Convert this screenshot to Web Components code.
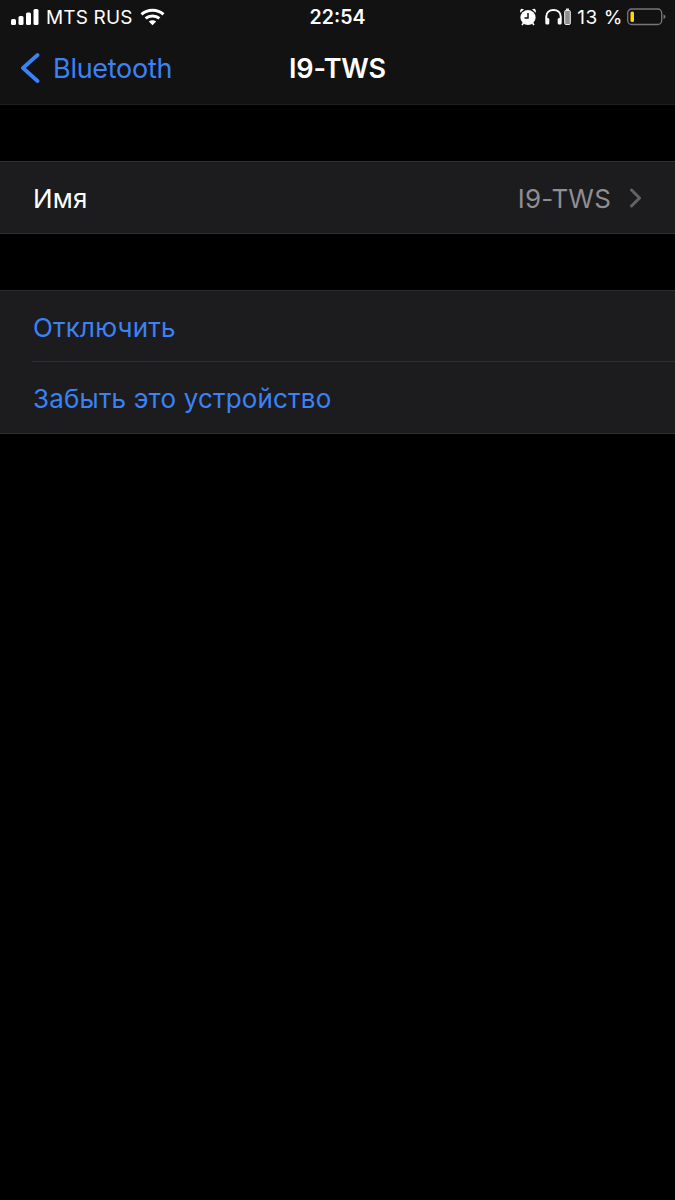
<!DOCTYPE html>
<html lang="ru">
<head>
<meta charset="utf-8">
<title>I9-TWS</title>
<style>
  html, body { margin: 0; background: #000; }
  body { height: 1200px; overflow: hidden; font-family: Inter, "Liberation Sans", sans-serif; }
  settings-group { margin-top: 56px; }
</style>
</head>
<body>
<nav-header back="Bluetooth" title="I9-TWS"></nav-header>
<settings-group>
  <settings-row label="Имя" value="I9-TWS"></settings-row>
</settings-group>
<settings-group>
  <settings-row label="Отключить" action></settings-row>
  <settings-row label="Забыть это устройство" action></settings-row>
</settings-group>

<script>
(function () {
  const statusTemplate = document.createElement("template");
  statusTemplate.innerHTML = `
    <style>
      :host {
        display: flex;
        align-items: center;
        justify-content: space-between;
        height: 34px;
        padding: 0 9px 0 11px;
        color: #fff;
        font-size: 19px;
        font-weight: 400;
        letter-spacing: 0.15px;
      }
      .side { display: flex; align-items: center; width: 240px; }
      .side.right { justify-content: flex-end; }
      .time { font-weight: 600; font-size: 19.5px; letter-spacing: 0; margin-right: 2px; }
      svg { display: block; flex: none; }
      .carrier { margin: 0 7px 0 7px; }
      .pct { margin: 0 4px 0 6px; letter-spacing: 0.6px; }
    </style>
    <div class="side">
      <svg width="28" height="18" viewBox="0 0 28 18" fill="#fff">
        <rect x="0" y="11" width="5" height="6" rx="1.5"/>
        <rect x="7.5" y="8" width="5" height="9" rx="1.5"/>
        <rect x="15" y="4.5" width="5" height="12.5" rx="1.5"/>
        <rect x="22.5" y="1" width="5" height="16" rx="1.5"/>
      </svg>
      <span class="carrier">MTS RUS</span>
      <svg width="25" height="18" viewBox="0 0 25 18" fill="none" stroke="#fff" stroke-width="3">
        <path d="M1.5 6.4C7.6 .9 17.4 .9 23.5 6.4"/>
        <path d="M5.6 10.4C9.4 7.2 15.6 7.2 19.4 10.4"/>
        <path d="M12.5 17.2L8.8 13.4C10.8 12 14.2 12 16.2 13.4Z" fill="#fff" stroke="none"/>
      </svg>
    </div>
    <span class="time">22:54</span>
    <div class="side right">
      <svg width="16" height="18" viewBox="0 0 16 18">
        <circle cx="8" cy="9.500" r="7.600" fill="#fff"/>
        <path d="M8 5v5H4.500" fill="none" stroke="#121212" stroke-width="1.500"/>
        <path d="M.3 4.800L4 1.200 1.400 .8C.3 1.200-.1 3.200.3 4.800ZM15.700 4.800L12 1.200 14.600 .8C15.700 1.200 16.100 3.200 15.700 4.800Z" fill="#fff"/>
        <path d="M3.500 15L2 17M12.500 15L14 17" stroke="#fff" stroke-width="1.600"/>
      </svg>
      <svg style="margin-left:9px" width="17" height="18" viewBox="0 0 17 18" fill="none">
        <path d="M1.300 11V8.500C1.300 4.500 4.500 2 8.500 2s7.200 2.500 7.200 6.500V11" stroke="#fff" stroke-width="2"/>
        <rect x="0.300" y="10" width="4" height="6.500" rx="1.500" fill="#fff"/>
        <rect x="12.700" y="10" width="4" height="6.500" rx="1.500" fill="#fff"/>
      </svg>
      <svg style="margin-left:2px" width="7" height="18" viewBox="0 0 7 18" fill="none">
        <rect x="2" y="0.500" width="3" height="2" fill="#ddd"/>
        <rect x="0.700" y="2.500" width="5.600" height="14" rx="1" fill="#8e8e8e" stroke="#eee" stroke-width="1"/>
      </svg>
      <span class="pct">13 %</span>
      <svg width="39" height="18" viewBox="0 0 39 18" fill="none">
        <rect x="0.700" y="1" width="34" height="15.500" rx="4" stroke="#777" stroke-width="1.300"/>
        <rect x="3.500" y="3.500" width="3.500" height="10.500" rx="1.500" fill="#ffd60a"/>
        <path d="M36.500 6.500C38 7 38.500 8 38.500 8.750S38 10.500 36.500 11Z" fill="#777"/>
      </svg>
    </div>
  `;

  class StatusBar extends HTMLElement {
    constructor() {
      super();
      this.attachShadow({ mode: "open" });
      this.shadowRoot.appendChild(statusTemplate.content.cloneNode(true));
    }
  }

  const headerTemplate = document.createElement("template");
  headerTemplate.innerHTML = `
    <style>
      :host {
        display: block;
        background: #121212;
        border-bottom: 1px solid #1f1f1f;
      }
      .bar {
        display: grid;
        grid-template-columns: 1fr auto 1fr;
        align-items: center;
        height: 70px;
        padding: 0 20px 2px;
        box-sizing: border-box;
      }
      .back {
        display: flex;
        align-items: center;
        gap: 13px;
        color: #3b82f6;
        font-size: 27px;
        letter-spacing: -0.28px;
      }
      .title {
        color: #fff;
        font-size: 27px;
        font-weight: 600;
        letter-spacing: -0.2px;
      }
      svg { display: block; }
    </style>
    <status-bar></status-bar>
    <div class="bar">
      <div class="back">
        <svg width="20" height="32" viewBox="0 0 20 32" fill="none">
          <path d="M17.500 3L3 16l14.500 13" stroke="#3b82f6" stroke-width="3.800" stroke-linecap="round" stroke-linejoin="round"/>
        </svg>
        <span class="label"></span>
      </div>
      <span class="title"></span>
      <span></span>
    </div>
  `;

  class NavHeader extends HTMLElement {
    constructor() {
      super();
      this.attachShadow({ mode: "open" });
      this.shadowRoot.appendChild(headerTemplate.content.cloneNode(true));
    }

    connectedCallback() {
      this.shadowRoot.querySelector(".label").textContent = this.getAttribute("back");
      this.shadowRoot.querySelector(".title").textContent = this.getAttribute("title");
    }
  }

  const groupTemplate = document.createElement("template");
  groupTemplate.innerHTML = `
    <style>
      :host {
        display: block;
        background: #1c1c1e;
        border-top: 1px solid #2e2e30;
        border-bottom: 1px solid #2e2e30;
      }
      ::slotted(settings-row:not(:last-child)) {
        --row-line: #2e2e30;
      }
    </style>
    <slot></slot>
  `;

  class SettingsGroup extends HTMLElement {
    constructor() {
      super();
      this.attachShadow({ mode: "open" });
      this.shadowRoot.appendChild(groupTemplate.content.cloneNode(true));
    }
  }

  const rowTemplate = document.createElement("template");
  rowTemplate.innerHTML = `
    <style>
      :host {
        display: block;
        padding-left: 32px;
        font-size: 26px;
        letter-spacing: 0.17px;
        color: #fff;
      }
      :host([action]) { color: #3b82f6; }
      .inner {
        display: flex;
        align-items: center;
        justify-content: space-between;
        box-sizing: border-box;
        height: 71px;
        padding: 2px 33px 0 1px;
        border-bottom: 1px solid var(--row-line, transparent);
      }
      .end { display: flex; align-items: center; gap: 18px; color: #8e8e93; }
      svg { display: block; }
    </style>
    <div class="inner">
      <span class="label"></span>
      <span class="end">
        <span class="value"></span>
        <svg width="13" height="20" viewBox="0 0 13 20" fill="none">
          <path d="M2.500 2l8 8-8 8" stroke="#636366" stroke-width="3" stroke-linecap="round" stroke-linejoin="round"/>
        </svg>
      </span>
    </div>
  `;

  class SettingsRow extends HTMLElement {
    constructor() {
      super();
      this.attachShadow({ mode: "open" });
      this.shadowRoot.appendChild(rowTemplate.content.cloneNode(true));
    }

    connectedCallback() {
      this.shadowRoot.querySelector(".label").textContent = this.getAttribute("label");
      if (this.hasAttribute("value")) {
        this.shadowRoot.querySelector(".value").textContent = this.getAttribute("value");
      } else {
        this.shadowRoot.querySelector(".end").style.display = "none";
      }
    }
  }

  customElements.define("status-bar", StatusBar);
  customElements.define("nav-header", NavHeader);
  customElements.define("settings-group", SettingsGroup);
  customElements.define("settings-row", SettingsRow);
})();
</script>
</body>
</html>
